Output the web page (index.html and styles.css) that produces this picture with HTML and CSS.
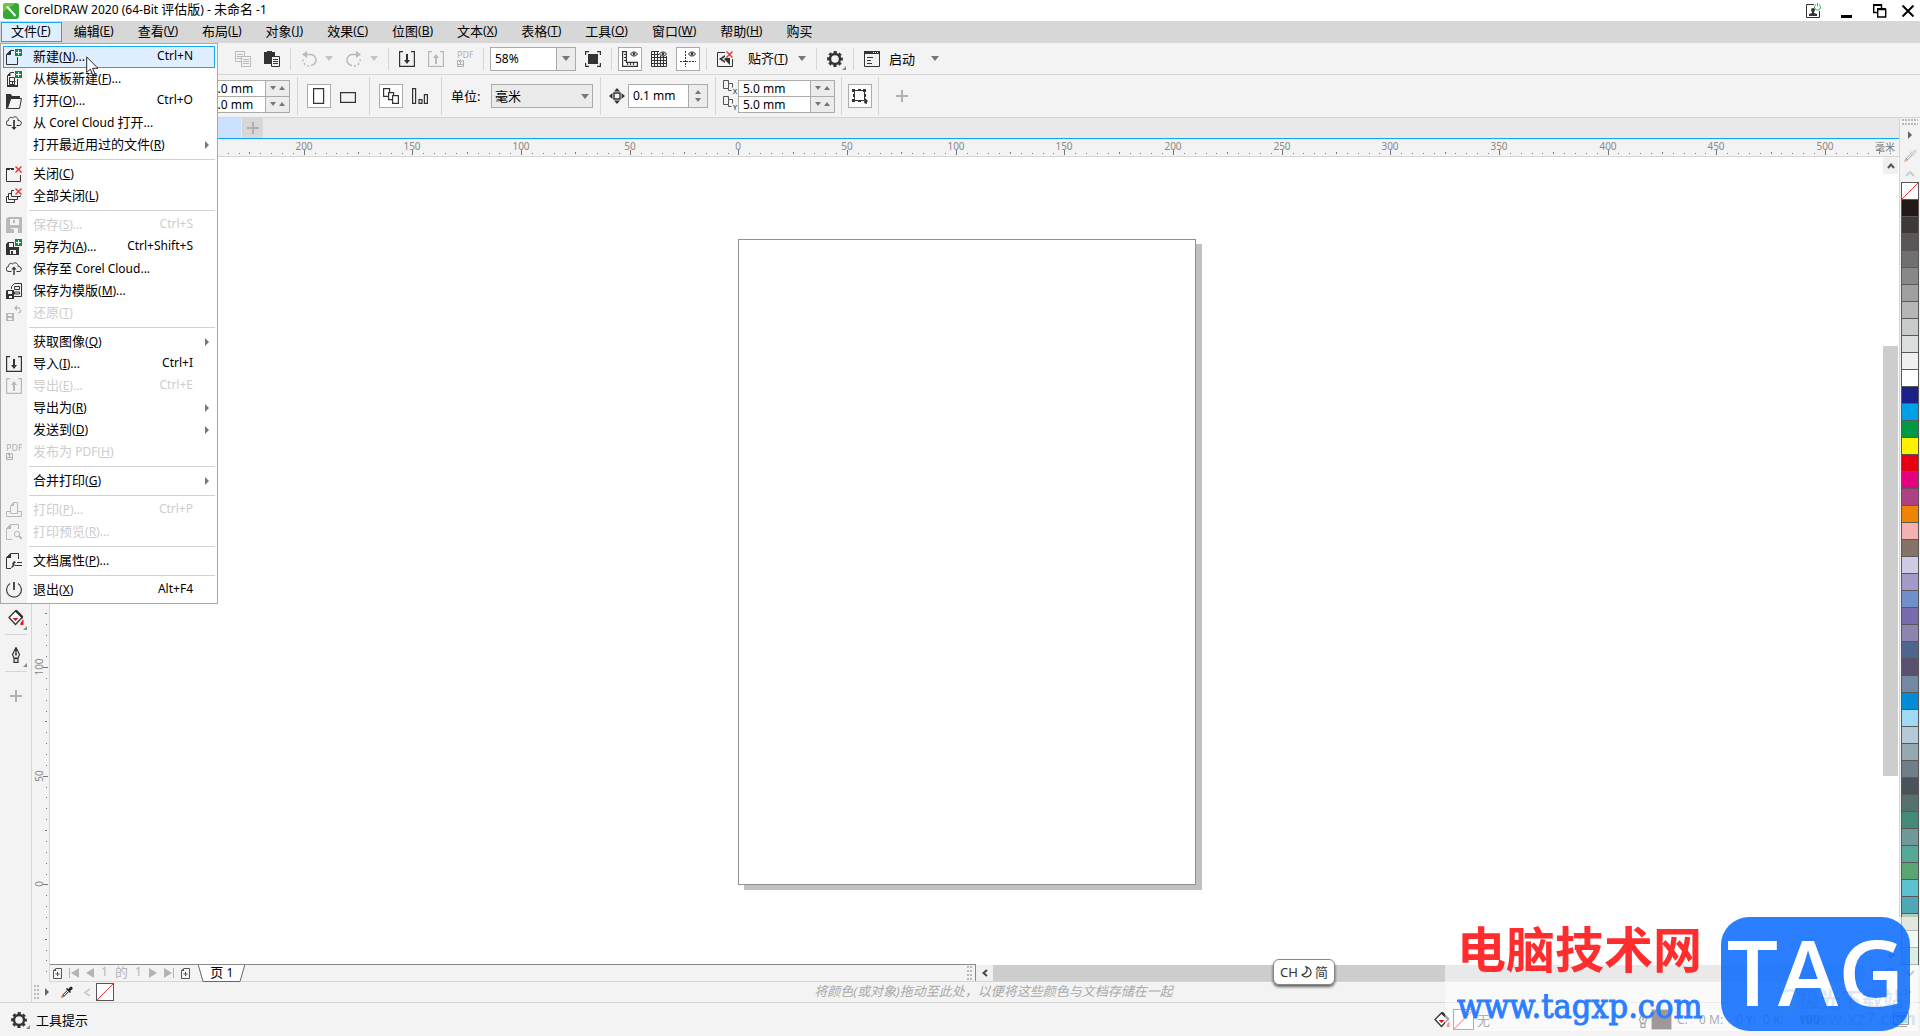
FILE: index.html
```html
<!DOCTYPE html>
<html lang="zh-CN">
<head>
<meta charset="utf-8">
<title>CorelDRAW 2020 (64-Bit 评估版) - 未命名 -1</title>
<link rel="stylesheet" href="styles.css">
</head>
<body>
<svg class="defs" aria-hidden="true">
  <symbol id="i-new" viewBox="0 0 16 16"><path fill="none" stroke="#333" d="M8 1.500H4.500L.5 5.500V15.500H11.500V8M4.500 1.500V5.500H.5"/><path fill="#333" d="M4.500 1 .5 5.500h4z"/><path fill="#00923f" d="M9 0h7v7H9z"/><path stroke="#fff" d="M12.500 1v5M10 3.500h5"/></symbol>
  <symbol id="i-template" viewBox="0 0 16 16"><path fill="none" stroke="#333" d="M8 1.500H4.500L1.500 4.500V15.500H11.500V8M3.500 6.500h5v7h-5zM3.500 10.500h6M6.500 10v3.500"/><path fill="#333" d="M4.500 1 1 5h3.500zM1 14h11v2H1z"/><path fill="#00923f" d="M9 0h7v7H9z"/><path stroke="#fff" d="M12.500 1v5M10 3.500h5"/></symbol>
  <symbol id="i-open" viewBox="0 0 16 16"><path fill="#333" d="M0 1h5l1 2h8v3H5L1 16H0z"/><path fill="none" stroke="#333" d="M1.500 15.500 4.500 5.500H15.500L13.500 15.500Z"/></symbol>
  <symbol id="i-clouddown" viewBox="0 0 16 16"><path fill="none" stroke="#333" d="M5.500 10.500H3a2.500 2.500 0 0 1-.5-5C2.500 2.500 5 1.500 6.500 3 9 .5 12.500 2.500 12 5.500c4-.5 4.500 5 1 5h-2.500M8 5v8"/><path fill="#333" d="M7.300 5h1.400v7h2L8 15l-2.700-3h2z"/></symbol>
  <symbol id="i-cloudup" viewBox="0 0 16 16"><path fill="none" stroke="#333" d="M5.500 10.500H3a2.500 2.500 0 0 1-.5-5C2.500 2.500 5 1.500 6.500 3 9 .5 12.500 2.500 12 5.500c4-.5 4.500 5 1 5h-2.500"/><path fill="#333" d="M7.300 14h1.400V8.500h2L8 5.500 5.300 8.500h2z"/></symbol>
  <symbol id="i-close" viewBox="0 0 16 16"><path fill="none" stroke="#333" d="M8 2.500H.5V15.500H14.500V9"/><path fill="#333" d="M0 2h4v2H0zM5 2h3v2H5z"/><path stroke="#ee2a2a" stroke-width="1.300" d="m9.500.5 6 6m0-6-6 6"/></symbol>
  <symbol id="i-closeall" viewBox="0 0 16 16"><path fill="none" stroke="#333" d="M8 2.500H5.500V8.500H14.500V7.500M5.500 5.500H2.500V11.500H11.500V8.500M2.500 8.500H.5V14.500H8.500V11.500"/><path stroke="#ee2a2a" stroke-width="1.300" d="m9.500.5 6 6m0-6-6 6"/></symbol>
  <symbol id="i-save" viewBox="0 0 16 16"><path fill="#b9b9b9" fill-rule="evenodd" d="M2 0h14v16H0V2zM4 2v6h9V2zM5 11v5h7v-5z"/><path fill="#b9b9b9" d="M7 3h2v3H7zM5 12h3v4H5z"/></symbol>
  <symbol id="i-saveas" viewBox="0 0 16 16"><path fill="#333" fill-rule="evenodd" d="M2 3h6v5h5v8H0V5zM3 4v4h4V4zM4 11v4h6v-4z"/><path fill="#333" d="M5 12h2v3H5z"/><path fill="#00923f" d="M9 0h7v7H9z"/><path stroke="#fff" d="M12.500 1v5M10 3.500h5"/></symbol>
  <symbol id="i-savetpl" viewBox="0 0 16 16"><path fill="none" stroke="#333" d="M8.500.5H15.500V13.500H8M8.500.5 5.500 3.500V6M8.500 3.500h5M8.500 3.500v3h5v-3M8.500 9h5v2h-5z"/><path fill="#333" fill-rule="evenodd" d="M1 7h7v9H0V8zM2 8v3h4V8zM3 13v2h3v-2z"/></symbol>
  <symbol id="i-revert" viewBox="0 0 16 16"><path fill="#b9b9b9" fill-rule="evenodd" d="M0 8h8v8H0zM2 9v2h4V9zM2 13v2h4v-2z"/><path fill="none" stroke="#b9b9b9" stroke-width="1.500" d="M10 3h3a2.500 2.500 0 0 1-1 4.800" stroke-dasharray="4 1"/><path fill="#b9b9b9" d="m8 3 3-3v6z"/></symbol>
  <symbol id="i-import" viewBox="0 0 16 16"><path fill="none" stroke="currentColor" stroke-width="1.200" d="M4 .6H.6V15.400H15.400V.6H12"/><path fill="currentColor" d="M7 3h2v6h2l-3 4-3-4h2z"/></symbol>
  <symbol id="i-export" viewBox="0 0 16 16"><path fill="none" stroke="currentColor" stroke-width="1.200" d="M4 .6H.6V15.400H15.400V.6H12"/><path fill="currentColor" d="M7 13h2V7h2L8 3 5 7h2z"/></symbol>
  <symbol id="i-pdf" viewBox="0 0 16 16"><text x="0" y="7" font-family="Noto Sans, sans-serif" font-size="9" fill="#b0b0b0">PDF</text><path fill="none" stroke="#b0b0b0" d="M3 9.500H.5V15.500H6.500V9.500H5M3.500 8.500v5M2 10.500h3M1 13.500h5"/></symbol>
  <symbol id="i-print" viewBox="0 0 16 16"><path fill="none" stroke="#b9b9b9" d="M5 9.500H.5V14.500H15.500V9.500H11M4.500 11.500V4.500l3-4h4V11.500z"/><path fill="#b9b9b9" d="M4 4 8 0v4z"/></symbol>
  <symbol id="i-preview" viewBox="0 0 16 16"><path fill="none" stroke="#b9b9b9" d="M6 15.500H.5V4.500l4-4H12.500V5"/><path fill="#b9b9b9" d="M0 5 5 0v5z"/><circle cx="11" cy="10" r="2.700" fill="none" stroke="#b9b9b9"/><path stroke="#b9b9b9" stroke-width="2" d="m13 12 3 3"/></symbol>
  <symbol id="i-props" viewBox="0 0 16 16"><path fill="none" stroke="#333" d="M5 15.500H.5V4.500l4-4H12.500V6M11 9.500h5M9 12.500h7"/><path fill="#333" d="M0 5 5 0v5zM8 8l2 1-2 2 1 1-3 3-1-1 2-2-1-1z"/></symbol>
  <symbol id="i-exit" viewBox="0 0 16 16"><path fill="none" stroke="#444" stroke-width="1.200" d="M4 1.500a7.400 7.400 0 1 0 8 0"/><path stroke="#222" stroke-width="1.600" d="M8 0v8"/></symbol>
  <symbol id="i-gear" viewBox="0 0 16 16"><circle cx="8" cy="8" r="5" fill="none" stroke="#333" stroke-width="2.400"/><circle cx="8" cy="8" r="6.900" fill="none" stroke="#333" stroke-width="2" stroke-dasharray="3.200 2.220" stroke-dashoffset="1.600"/></symbol>
  <symbol id="i-copy" viewBox="0 0 16 16"><path fill="#f3f3f3" stroke="#b9b9b9" d="M.5.500h9v10h-9z"/><path stroke="#b9b9b9" d="M2 3.500h6M2 5.500h5M2 7.500h5"/><path fill="#f3f3f3" stroke="#b9b9b9" d="M6.500 5.500h9v10h-9z"/><path stroke="#b9b9b9" d="M8 8.500h6M8 10.500h6M8 12.500h6"/></symbol>
  <symbol id="i-paste" viewBox="0 0 16 16"><path fill="#333" d="M0 1h3V0h5v1h3v12H0z"/><path fill="#f3f3f3" stroke="#333" d="M7.500 5.500h8v10h-8z"/><path stroke="#333" d="M9 8.500h5M9 10.500h5M9 12.500h5"/></symbol>
  <symbol id="i-undo" viewBox="0 0 16 16"><path fill="none" stroke="#b9b9b9" stroke-width="1.500" d="M5 3.500h4a5.500 5.500 0 0 1 1 11"/><path fill="none" stroke="#b9b9b9" stroke-width="1.500" stroke-dasharray="2 2" d="M8 15a6 6 0 0 1-6-7"/><path fill="#b9b9b9" d="m1 3.500 5-3.500v7z"/></symbol>
  <symbol id="i-full" viewBox="0 0 16 16"><path fill="#333" d="M3 3h10v10H3z"/><path fill="none" stroke="#333" stroke-width="1.200" d="M4 .6H.6V4M12 .6h3.400V4M4 15.400H.6V12M12 15.400h3.400V12"/></symbol>
  <symbol id="i-eye" viewBox="0 0 8 6"><path fill="#fff" stroke="#333" d="M.5 3C2 .3 6 .3 7.500 3 6 5.700 2 5.700.5 3z"/><circle cx="4" cy="3" r="1.400" fill="#333"/></symbol>
  <symbol id="i-rulers" viewBox="0 0 16 16"><path fill="none" stroke="#333" stroke-width="1.200" d="M.6.600H4.400V11.400H15.400V15.400H.6zM2 3.500h2M2 6.500h2M2 9.500h2M5.500 12v2M8.500 12v2M11.500 12v2"/><use href="#i-eye" x="8" y="0" width="8" height="6"/></symbol>
  <symbol id="i-grid" viewBox="0 0 16 16"><path fill="none" stroke="#333" d="M.5.500H15.500V15.500H.5zM3.500 0v16M6.500 0v16M9.500 0v16M12.500 0v16M0 3.500h16M0 6.500h16M0 9.500h16M0 12.500h16"/><path fill="#f3f3f3" d="M8 0h8v5H8z"/><use href="#i-eye" x="8" y="0" width="8" height="6"/></symbol>
  <symbol id="i-guides" viewBox="0 0 16 16"><path stroke="#333" stroke-dasharray="2 1" d="M5.500 0v16M0 10.500h16"/><use href="#i-eye" x="8" y="0" width="8" height="6"/></symbol>
  <symbol id="i-snap" viewBox="0 0 16 16"><path fill="none" stroke="#333" d="M8 1.500H.5V15.500H15.500V8"/><path fill="#333" d="m2 8 6-4v2L5 8l3 2v2zM7 8l6-4v10z"/><path fill="#f3f3f3" d="M9 0h7v7H9z"/><path stroke="#ee2a2a" stroke-width="1.300" d="m9.500.5 6 6m0-6-6 6"/></symbol>
  <symbol id="i-launch" viewBox="0 0 16 16"><path fill="none" stroke="#333" d="M.5.500H15.500V15.500H.5zM3 6.500h6M3 9.500h4M3 12.500h5"/><path fill="#333" d="M0 0h16v3H0z"/><path stroke="#f3f3f3" d="M9 1.500h1M11 1.500h1M13 1.500h1"/></symbol>
  <symbol id="i-pages" viewBox="0 0 16 16"><path fill="#fff" stroke="#333" stroke-width="1.200" d="M.6.600h6v7.800h-6z"/><path fill="#fff" stroke="#333" stroke-width="1.200" d="M5.600 4.600h5v7h-5z"/><path fill="#fff" stroke="#333" stroke-width="1.200" d="M9.600 7.600h5.800v7.800H9.600z"/></symbol>
  <symbol id="i-bars" viewBox="0 0 16 16"><path fill="none" stroke="#333" stroke-width="1.200" d="M.6.600h3v14.800h-3zM7 11.600h3v3.800H7zM12.400 6.600h3v8.800h-3z"/></symbol>
  <symbol id="i-nudge" viewBox="0 0 16 16"><path fill="none" stroke="#333" stroke-width="1.400" d="M5 5h6v6H5z"/><path fill="#333" d="m8 0 3 3.500H5zM8 16l3-3.500H5zM0 8l3.500-3v6zM16 8l-3.500-3v6z"/></symbol>
  <symbol id="i-dup" viewBox="0 0 13 14"><path fill="none" stroke="#555" d="M.5.500h5v8h-5zM6 3.500h3.500v4M5.500 8.500v2h3"/></symbol>
  <symbol id="i-bound" viewBox="0 0 16 16"><path fill="none" stroke="#333" d="M2.500 2.500h10v10h-10z"/><path fill="#333" d="M0 1h3v3H0zM11 1h3v3h-3zM0 11h3v3H0zM6 1h3v2H6zM6 12h3v2H6zM1 6h2v3H1zM12 6h2v3h-2zM13 10l3 3-1 1v2l-3-1z"/></symbol>
  <symbol id="i-fill" viewBox="0 0 16 16"><path fill="#fff" stroke="#333" stroke-width="1.300" d="M7.500 1 14 7.500l-6.500 7L1 7.500z"/><path fill="#333" d="M7 0h2l6 6v2l-2 1V7L8 2z"/><path fill="#e11" d="M4.500 8h6l-3 3zM12.500 13l3-4v6h-3z"/></symbol>
  <symbol id="i-pen" viewBox="0 0 10 16"><path fill="none" stroke="#333" stroke-width="1.200" d="M5 .5 1.500 7.500 3 11h4l1.500-3.500zM3 11.600h4v3.800H3zM5 1v6"/><circle cx="5" cy="7.500" r="1" fill="#333"/></symbol>
  <symbol id="i-dropper" viewBox="0 0 12 12"><path stroke="#555" stroke-width="2.500" d="m2 10 5-5"/><path stroke="#fff" d="m3 9 4-4"/><path fill="currentColor" d="m5 3 4 4 1-1-1-1 2-1.500C12.500 2 11 0 9 1L7.500 3 6 2z"/><path fill="#d9631e" d="m0 12 1-3 2 2z"/></symbol>
  <symbol id="i-addpage" viewBox="0 0 9 11"><path fill="none" stroke="#555" d="M3 .5h5.500v10h-8V3zM4.500 4v4M2.500 6h4"/><path fill="#555" d="M0 3 3 0v3z"/></symbol>
</svg>

<div class="app">
  <header class="titlebar">
    <svg class="logo" viewBox="0 0 16 16"><rect width="16" height="16" rx="3" fill="#35a835"/><path d="M0 3a3 3 0 0 1 3-3h10L0 9z" fill="#6cc83c"/><path d="m3 4 2-1 8 9-1 2z" fill="#fff"/></svg>
    <h1>CorelDRAW 2020 (64-Bit <span class="zh">评估版</span>) - <span class="zh">未命名</span> -1</h1>
    <div class="winbtns">
      <button aria-label="登录"><svg width="16" height="16" viewBox="0 0 16 16"><path fill="none" stroke="#333" d="M9 1.500H1.500v13H14.500V8"/><circle cx="8" cy="7" r="2" fill="#333"/><path fill="#333" d="M7 8h2v2l3 1v2H4v-2l3-1z"/><path fill="none" stroke="#1faa59" d="M11 1.500a3 3 0 1 0 3 0M12.500 0v3"/></svg></button>
      <button aria-label="最小化"><svg width="12" height="16" viewBox="0 0 12 16"><path d="M0 12h11v3H0z"/></svg></button>
      <button aria-label="还原"><svg width="14" height="14" viewBox="0 0 14 14"><path fill="none" stroke="#000" stroke-width="1.400" d="M4 8.500H.7V1H8.500V4M4.700 5.500h8v7.500h-8z"/><path d="M0 0h9v2H0zM4 4h9v2H4z"/></svg></button>
      <button class="quit" aria-label="关闭"><svg width="14" height="12" viewBox="0 0 14 12"><path stroke="#000" stroke-width="2" d="m1.500.5 11 11m0-11-11 11"/></svg></button>
    </div>
  </header>

  <nav class="menubar">
    <button class="open">文件<span class="en">(<u>F</u>)</span></button>
    <button>编辑<span class="en">(<u>E</u>)</span></button>
    <button>查看<span class="en">(<u>V</u>)</span></button>
    <button>布局<span class="en">(<u>L</u>)</span></button>
    <button>对象<span class="en">(<u>J</u>)</span></button>
    <button>效果<span class="en">(<u>C</u>)</span></button>
    <button>位图<span class="en">(<u>B</u>)</span></button>
    <button>文本<span class="en">(<u>X</u>)</span></button>
    <button>表格<span class="en">(<u>T</u>)</span></button>
    <button>工具<span class="en">(<u>O</u>)</span></button>
    <button>窗口<span class="en">(<u>W</u>)</span></button>
    <button>帮助<span class="en">(<u>H</u>)</span></button>
    <button>购买</button>
  </nav>

  <div class="toolbar standard">
    <button class="tool" aria-label="复制"><svg><use href="#i-copy"/></svg></button>
    <button class="tool" aria-label="粘贴"><svg><use href="#i-paste"/></svg></button>
    <i class="sep"></i>
    <button class="tool" aria-label="撤消"><svg><use href="#i-undo"/></svg></button>
    <button class="more" aria-label="撤消列表"><i class="caret pale"></i></button>
    <button class="tool" aria-label="重做"><svg class="flip"><use href="#i-undo"/></svg></button>
    <button class="more" aria-label="重做列表"><i class="caret pale"></i></button>
    <i class="sep"></i>
    <button class="tool" aria-label="导入"><svg><use href="#i-import"/></svg></button>
    <button class="tool off" aria-label="导出"><svg><use href="#i-export"/></svg></button>
    <button class="tool" aria-label="发布为 PDF"><svg><use href="#i-pdf"/></svg></button>
    <i class="sep"></i>
    <div class="field zoomlevel"><input type="text" value="58%" aria-label="缩放级别"><button aria-label="缩放列表"><i class="caret"></i></button></div>
    <button class="tool" aria-label="全屏预览"><svg><use href="#i-full"/></svg></button>
    <i class="sep"></i>
    <button class="tool on" aria-label="显示标尺"><svg><use href="#i-rulers"/></svg></button>
    <button class="tool" aria-label="显示网格"><svg><use href="#i-grid"/></svg></button>
    <button class="tool on" aria-label="显示辅助线"><svg><use href="#i-guides"/></svg></button>
    <i class="sep"></i>
    <button class="tool" aria-label="关闭贴齐"><svg><use href="#i-snap"/></svg></button>
    <button class="textbtn snap"><span>贴齐<span class="en">(<u>T</u>)</span></span><i class="caret"></i></button>
    <i class="sep"></i>
    <button class="tool corner" aria-label="选项"><svg><use href="#i-gear"/></svg></button>
    <i class="sep"></i>
    <button class="tool" aria-label="启动器"><svg><use href="#i-launch"/></svg></button>
    <button class="textbtn launch"><span>启动</span><i class="caret"></i></button>
  </div>

  <div class="toolbar property">
    <div class="pair pagesize">
      <div class="field"><input type="text" value="210.0 mm" aria-label="页面宽度"><button aria-label="调整宽度"><i class="caret sm"></i><i class="caret sm up"></i></button></div>
      <div class="field"><input type="text" value="297.0 mm" aria-label="页面高度"><button aria-label="调整高度"><i class="caret sm"></i><i class="caret sm up"></i></button></div>
    </div>
    <i class="sep near"></i>
    <button class="tool on" aria-label="纵向"><svg viewBox="0 0 16 16"><path fill="none" stroke="#333" stroke-width="1.200" d="M2.600.6h10v14.800h-10z"/></svg></button>
    <button class="tool" aria-label="横向"><svg viewBox="0 0 16 16"><path fill="none" stroke="#333" stroke-width="1.200" d="M.6 4.600h14.800v9.800H.6z"/></svg></button>
    <i class="sep"></i>
    <button class="tool on" aria-label="所有页面"><svg><use href="#i-pages"/></svg></button>
    <button class="tool" aria-label="当前页面"><svg><use href="#i-bars"/></svg></button>
    <i class="sep"></i>
    <label class="unitlabel" for="unit">单位:</label>
    <div class="unit"><select id="unit"><option>毫米</option></select><i class="caret"></i></div>
    <i class="sep near"></i>
    <div class="nudge"><svg width="16" height="16"><use href="#i-nudge"/></svg><div class="field"><input type="text" value="0.1 mm" aria-label="微调距离"><button class="stack" aria-label="调整微调距离"><i class="caret sm up"></i><i class="caret sm"></i></button></div></div>
    <i class="sep near"></i>
    <div class="dup">
      <div class="dupicons"><span><svg width="13" height="14"><use href="#i-dup"/></svg><b>X</b></span><span><svg width="13" height="14"><use href="#i-dup"/></svg><b>Y</b></span></div>
      <div class="pair">
        <div class="field"><input type="text" value="5.0 mm" aria-label="再制距离 X"><button aria-label="调整 X"><i class="caret sm"></i><i class="caret sm up"></i></button></div>
        <div class="field"><input type="text" value="5.0 mm" aria-label="再制距离 Y"><button aria-label="调整 Y"><i class="caret sm"></i><i class="caret sm up"></i></button></div>
      </div>
    </div>
    <i class="sep tight"></i>
    <button class="tool on" aria-label="视为已填充"><svg><use href="#i-bound"/></svg></button>
    <i class="sep tight"></i>
    <button class="add" aria-label="自定义"><i class="plus"></i></button>
  </div>

  <div class="body">
    <aside class="toolbox">
      <button class="corner" aria-label="交互式填充"><svg width="16" height="16"><use href="#i-fill"/></svg></button>
      <hr>
      <button class="corner" aria-label="轮廓笔"><svg width="10" height="16"><use href="#i-pen"/></svg></button>
      <hr>
      <button aria-label="快速自定义"><i class="plus"></i></button>
    </aside>

    <div class="workspace">
      <div class="upper">
        <div class="document">
          <div class="doctabs"><button class="doctab" aria-label="未命名 -1"></button><button class="newtab" aria-label="新文档"><i class="plus"></i></button></div>
          <div class="hruler"><svg id="hruler"></svg><span>毫米</span></div>
          <div class="view">
            <div class="vruler"><svg id="vruler"></svg></div>
            <div class="drawing">
              <div class="stage">
                <div class="canvas"><div class="page"></div></div>
                <div class="vscroll"><button aria-label="向上"><svg width="8" height="6" viewBox="0 0 8 6"><path fill="none" stroke="#555" stroke-width="2" d="m1 5 3-3.500L7 5"/></svg></button><i class="thumb"></i><button class="clear" aria-label="向下"><svg width="8" height="6" viewBox="0 0 8 6"><path fill="none" stroke="#333" stroke-width="2" d="m1 1 3 3.500L7 1"/></svg></button></div>
              </div>
              <div class="pagebar">
                <div class="pagenav">
                  <button aria-label="在前面加页"><svg width="9" height="11"><use href="#i-addpage"/></svg></button>
                  <button aria-label="第一页"><svg width="10" height="10" viewBox="0 0 10 10"><path fill="#b4b4b4" d="M0 0h1v10H0zM10 0v10L2 5z"/></svg></button>
                  <button aria-label="上一页"><svg width="8" height="10" viewBox="0 0 8 10"><path fill="#b4b4b4" d="M8 0v10L0 5z"/></svg></button>
                  <span class="en">1</span><span>的</span><span class="en">1</span>
                  <button aria-label="下一页"><svg width="8" height="10" viewBox="0 0 8 10"><path fill="#b4b4b4" d="M0 0v10l8-5z"/></svg></button>
                  <button aria-label="最后一页"><svg width="10" height="10" viewBox="0 0 10 10"><path fill="#b4b4b4" d="M9 0h1v10H9zM0 0v10l8-5z"/></svg></button>
                  <button aria-label="在后面加页"><svg width="9" height="11"><use href="#i-addpage"/></svg></button>
                  <button class="pagetab"><svg width="48" height="17" viewBox="0 0 48 17"><path fill="#fff" d="M0-1 5 16H42L47-1z"/><path fill="none" stroke="#666" d="M0-1 5 16.500H42L47-1"/></svg><span>页 <span class="en">1</span></span></button>
                  <i class="grip"></i>
                </div>
                <div class="hscroll"><button aria-label="向左"><svg width="6" height="8" viewBox="0 0 6 8"><path fill="none" stroke="#444" stroke-width="2" d="M5 1 1.500 4 5 7"/></svg></button><i class="thumb"></i><button class="clear" aria-label="向右"><svg width="6" height="8" viewBox="0 0 6 8"><path fill="none" stroke="#444" stroke-width="2" d="m1 1 3.500 3L1 7"/></svg></button><button class="clear" aria-label="导航器"><svg width="12" height="12" viewBox="0 0 12 12"><circle cx="5" cy="5" r="4" fill="none" stroke="#444"/><path stroke="#444" d="M5 3v4M3 5h4M8 8l3.500 3.500"/></svg></button></div>
              </div>
            </div>
          </div>
        </div>
        <aside class="palette">
          <i class="grip wide"></i>
          <button aria-label="调色板菜单"><i class="play"></i></button>
          <button class="pale" aria-label="滴管"><svg width="13" height="13"><use href="#i-dropper"/></svg></button>
          <button class="short" aria-label="向上滚动"><svg width="10" height="8" viewBox="0 0 10 8"><path fill="none" stroke="#ccc" stroke-width="2" d="m1 6 4-4 4 4"/></svg></button>
          <div class="swatches" id="swatches"></div>
          <button class="short" aria-label="向下滚动"><svg width="10" height="8" viewBox="0 0 10 8"><path fill="none" stroke="#888" stroke-width="2" d="m1 1 4 4 4-4"/></svg></button>
        </aside>
      </div>
      <div class="tray">
        <i class="grip"></i>
        <button aria-label="文档调色板菜单"><i class="play"></i></button>
        <button class="eyedrop" aria-label="滴管"><svg width="12" height="12"><use href="#i-dropper"/></svg></button>
        <button aria-label="向左滚动"><svg width="8" height="9" viewBox="0 0 8 9"><path fill="none" stroke="#ccc" stroke-width="2" d="M7 1 2 4.500 7 8"/></svg></button>
        <button class="nocolor" aria-label="无颜色"></button>
        <p>将颜色(或对象)拖动至此处，以便将这些颜色与文档存储在一起</p>
        <button aria-label="展开"><svg width="8" height="8" viewBox="0 0 8 8"><path fill="none" stroke="#777" d="m1 1 3 3-3 3M4 1l3 3-3 3"/></svg></button>
      </div>
    </div>
  </div>

  <footer class="status">
    <button class="corner gear" aria-label="状态栏选项"><svg width="16" height="16"><use href="#i-gear"/></svg></button>
    <span class="hint">工具提示</span>
    <div class="fillinfo"><svg width="16" height="16"><use href="#i-fill"/></svg><i class="chip none"></i><span>无</span></div>
    <div class="outlineinfo"><svg width="10" height="16"><use href="#i-pen"/></svg><i class="chip"></i><span class="cmyk"><span>C:</span><span>0</span><span>M:</span><span>0</span><span>Y:</span><span>0</span><span>K:</span><span>100</span></span></div>
    <svg class="proof" width="16" height="16" viewBox="0 0 16 16"><path fill="#fff" stroke="#333" d="M.5.500h15v12H.5z"/><path fill="#b33a78" d="M2 2h10v3H2z"/><path fill="#3fc0b0" d="M5 5h9v6H5z"/><path stroke="#333" d="M2 14.500h12"/></svg>
  </footer>
</div>

<div class="filemenu" role="menu">
  <button class="hot"><svg><use href="#i-new"/></svg><span>新建<span class="en">(<u>N</u>)...</span></span><kbd>Ctrl+N</kbd></button>
  <button><svg><use href="#i-template"/></svg><span>从模板新建<span class="en">(<u>F</u>)...</span></span></button>
  <button><svg><use href="#i-open"/></svg><span>打开<span class="en">(<u>O</u>)...</span></span><kbd>Ctrl+O</kbd></button>
  <button><svg><use href="#i-clouddown"/></svg><span>从<span class="en"> Corel Cloud </span>打开<span class="en">...</span></span></button>
  <button class="sub"><svg></svg><span>打开最近用过的文件<span class="en">(<u>R</u>)</span></span></button>
  <hr>
  <button><svg><use href="#i-close"/></svg><span>关闭<span class="en">(<u>C</u>)</span></span></button>
  <button><svg><use href="#i-closeall"/></svg><span>全部关闭<span class="en">(<u>L</u>)</span></span></button>
  <hr>
  <button class="off"><svg><use href="#i-save"/></svg><span>保存<span class="en">(<u>S</u>)...</span></span><kbd>Ctrl+S</kbd></button>
  <button><svg><use href="#i-saveas"/></svg><span>另存为<span class="en">(<u>A</u>)...</span></span><kbd>Ctrl+Shift+S</kbd></button>
  <button><svg><use href="#i-cloudup"/></svg><span>保存至<span class="en"> Corel Cloud...</span></span></button>
  <button><svg><use href="#i-savetpl"/></svg><span>保存为模版<span class="en">(<u>M</u>)...</span></span></button>
  <button class="off"><svg><use href="#i-revert"/></svg><span>还原<span class="en">(<u>T</u>)</span></span></button>
  <hr>
  <button class="sub"><svg></svg><span>获取图像<span class="en">(<u>Q</u>)</span></span></button>
  <button><svg><use href="#i-import"/></svg><span>导入<span class="en">(<u>I</u>)...</span></span><kbd>Ctrl+I</kbd></button>
  <button class="off"><svg><use href="#i-export"/></svg><span>导出<span class="en">(<u>E</u>)...</span></span><kbd>Ctrl+E</kbd></button>
  <button class="sub"><svg></svg><span>导出为<span class="en">(<u>R</u>)</span></span></button>
  <button class="sub"><svg></svg><span>发送到<span class="en">(<u>D</u>)</span></span></button>
  <button class="off"><svg><use href="#i-pdf"/></svg><span>发布为<span class="en"> PDF(<u>H</u>)</span></span></button>
  <hr>
  <button class="sub"><svg></svg><span>合并打印<span class="en">(<u>G</u>)</span></span></button>
  <hr>
  <button class="off"><svg><use href="#i-print"/></svg><span>打印<span class="en">(<u>P</u>)...</span></span><kbd>Ctrl+P</kbd></button>
  <button class="off"><svg><use href="#i-preview"/></svg><span>打印预览<span class="en">(<u>R</u>)...</span></span></button>
  <hr>
  <button><svg><use href="#i-props"/></svg><span>文档属性<span class="en">(<u>P</u>)...</span></span></button>
  <hr>
  <button><svg><use href="#i-exit"/></svg><span>退出<span class="en">(<u>X</u>)</span></span><kbd>Alt+F4</kbd></button>
</div>
<svg class="cursor" width="13" height="20" viewBox="0 0 13 20"><path fill="#fff" stroke="#223" d="M.7 1v15.500l3.600-3.400 2.500 6 2.300-1-2.500-5.800H12z"/></svg>

<div class="ime">CH <svg width="11" height="12" viewBox="0 0 11 12"><path fill="none" stroke="#333" stroke-width="1.200" d="M5 .8c2 2.500 1.500 6.500-4 8C4 12.500 9.500 11 10 7c.3-3-2-5.500-5-6.200z"/></svg> 简</div>

<div class="mark">
  <div class="site"><strong>电脑技术网</strong><span>www.tagxp.com</span></div>
  <div class="tag">TAG</div>
  <div class="faint"><svg width="42" height="34" viewBox="0 0 42 34"><path fill="none" stroke="#2a86d8" stroke-width="3" d="M40 2C22-1 4 8 3 20c0 10 16 12 24 4M22 14c-8-1-12 3-11 8 2 5 12 4 14-3h-6"/><path fill="#4aa36a" d="M26 24c5-2 10-8 11-14 5 8-2 16-11 14z"/></svg><div><b>极光下载站</b><span>www.xz7.com</span></div></div>
</div>
<script src="app.js"></script>
</body>
</html>
```
FILE: styles.css
```css
* { box-sizing: border-box; }
html, body { height: 100%; margin: 0; }
body { font: 13px/20px "Noto Sans", "Noto Sans CJK SC", sans-serif; color: #000; background: #f3f3f3; overflow: hidden; position: relative; }
button, input, select { font: inherit; color: inherit; margin: 0; padding: 0; border: 0; background: none; border-radius: 0; }
button { display: flex; align-items: center; justify-content: center; white-space: nowrap; }
svg { display: block; flex: none; }
i { display: block; flex: none; }
p { margin: 0; }
u { text-underline-offset: 1px; }
.defs { position: absolute; width: 0; height: 0; }
.en { font-size: 12px; white-space: pre; }
.app { min-height: 100%; height: 100%; display: flex; flex-direction: column; }

.caret { width: 0; height: 0; border: 4px solid transparent; border-top: 5px solid #777; border-bottom: 0; }
.caret.pale { border-top-color: #c4c4c4; }
.caret.sm { border-width: 4px 3px 0; }
.caret.up { transform: rotate(180deg); }
.plus { width: 12px; height: 12px; background: linear-gradient(#b0b0b0, #b0b0b0) center / 2px 12px no-repeat, linear-gradient(#b0b0b0, #b0b0b0) center / 12px 2px no-repeat; }
.play { width: 0; height: 0; border: 4px solid transparent; border-left: 4px solid #666; border-right: 0; }
.grip { width: 6px; height: 14px; background: radial-gradient(circle at 1px 1px, #bbb 1px, transparent 1px) 0 0 / 3px 4px; }
.corner { position: relative; }
.corner::after { content: ""; position: absolute; right: 0; bottom: 0; border: 2px solid #888; border-top-color: transparent; border-left-color: transparent; }

.titlebar { height: 21px; background: #fff; display: flex; align-items: center; padding: 0 5px 0 3px; }
.logo { width: 16px; height: 16px; margin-right: 5px; }
.titlebar h1 { font-size: 12px; font-weight: 400; margin: 0; flex: 1; padding-bottom: 2px; }
.zh { font-size: 13px; }
.winbtns { display: flex; gap: 20px; align-items: center; }
.quit { margin-left: -6px; }

.menubar { height: 22px; background: #d7d7d7; display: flex; padding: 1px 0 1px 1px; }
.menubar button { border: 1px solid transparent; padding: 0 11px 2px; height: 20px; }
.menubar .open { background: #dfefff; border-color: #14a7f5; padding: 0 10px 2px 9px; }

.toolbar { display: flex; align-items: center; gap: 5px; border-bottom: 1px solid #d5d5d5; background: #f3f3f3; }
.standard { height: 32px; padding-left: 231px; }
.property { height: 43px; padding-left: 190px; }
.tool { width: 24px; height: 24px; flex: none; color: #333; border: 1px solid transparent; }
.tool svg { width: 16px; height: 16px; }
.tool.on { background: #fff; border-color: #ababab; }
.tool.off { color: #b9b9b9; }
.flip { transform: scaleX(-1); }
.sep { width: 1px; height: 22px; background: #d5d5d5; margin: 0 1px; }
.property .sep { height: 38px; margin: 0 4px; }
.property .sep.near { margin-left: 2px; }
.property .sep.tight { margin: 0 1px; }
.more { width: 12px; margin: 0 2px 0 -3px; height: 24px; }
.textbtn { height: 24px; justify-content: flex-start; }
.snap { width: 68px; padding: 0 4px 0 6px; justify-content: space-between; }
.launch { gap: 16px; }

.field { display: flex; height: 24px; border: 1px solid #ababab; background: #fff; font-size: 12px; }
.field input { flex: 1; min-width: 0; padding-left: 4px; }
.field button { width: 24px; background: #ececec; border-left: 1px solid #ababab; justify-content: space-evenly; }
.zoomlevel { width: 86px; }
.zoomlevel button { width: 19px; }
.field .stack { width: 19px; flex-direction: column; }
.pair .field { height: 17px; line-height: 15px; }
.pair .field + .field { margin-top: -1px; }
.pair { width: 97px; }
.pagesize { width: 100px; }
.unitlabel { width: 35px; }
.unit { width: 102px; position: relative; }
.unit select { width: 100%; height: 24px; appearance: none; border: 1px solid #ababab; background: #ebebeb; padding-left: 3px; }
.unit .caret { position: absolute; right: 4px; top: 10px; pointer-events: none; }
.nudge { display: flex; align-items: center; gap: 3px; margin-left: -1px; }
.nudge .field { width: 80px; }
.dup { display: flex; align-items: center; margin-left: -2px; }
.dupicons { width: 15px; }
.dupicons span { display: flex; height: 16px; position: relative; }
.dupicons b { position: absolute; right: 1px; bottom: 0; font-size: 7px; line-height: 8px; font-weight: 400; }
.pagesize input { padding-left: 6px; }
.add { width: 34px; height: 24px; }

.body { flex: 1; min-height: 0; display: flex; }
.toolbox { width: 32px; flex: none; border-right: 1px solid #d5d5d5; border-bottom: 1px solid #d5d5d5; padding: 488px 4px 0 5px; }
.toolbox button { width: 22px; height: 24px; margin-bottom: 4px; }
.toolbox hr { border: 0; height: 1px; background: #d5d5d5; margin: 0 0 8px; }
.toolbox button + hr + button + hr + button { margin-top: 12px; }
.workspace { flex: 1; min-width: 0; display: flex; flex-direction: column; }
.upper { flex: 1; min-height: 0; display: flex; }
.document { flex: 1; min-width: 0; display: flex; flex-direction: column; }
.doctabs { height: 21px; flex: none; display: flex; background: #e9e9e9; border-bottom: 1px solid #0ea5f2; }
.doctab { width: 209px; background: #cce0ff; margin-right: 1px; }
.newtab { width: 21px; background: #d7d7d7; }
.hruler { height: 18px; flex: none; border-bottom: 1px solid #d5d5d5; position: relative; }
.hruler svg { width: 100%; height: 17px; }
.hruler span { position: absolute; right: 4px; top: 0; font-size: 10px; line-height: 16px; color: #777; }
.hruler text, .vruler text { font-size: 10px; fill: #888; text-anchor: middle; }
.view { flex: 1; min-height: 0; display: flex; }
.vruler { width: 18px; flex: none; border-right: 1px solid #d5d5d5; }
.vruler svg { width: 17px; height: 100%; }
.drawing { flex: 1; min-width: 0; display: flex; flex-direction: column; background: #fff; }
.stage { flex: 1; min-height: 0; display: flex; }
.canvas { flex: 1; position: relative; overflow: hidden; }
.page { position: absolute; left: 688px; top: 82px; width: 458px; height: 646px; border: 1px solid #909090; background: #fff; box-shadow: 6px 5px 0 #c0c0c0; }
.page::before, .page::after { content: ""; position: absolute; background: #fff; }
.page::before { right: -7px; top: -1px; width: 6px; height: 5px; }
.page::after { left: -1px; bottom: -6px; width: 6px; height: 5px; }
.vscroll { width: 15px; margin-right: 1px; display: flex; flex-direction: column; align-items: stretch; }
.vscroll button { height: 17px; background: #f0f0f0; }
.vscroll .thumb { height: 430px; margin: 172px 0 auto; background: #cdcdcd; }
.vscroll .clear, .hscroll .clear { background: none; }
.pagebar { height: 18px; flex: none; display: flex; background: #fff; border-bottom: 1px solid #d5d5d5; }
.pagenav { width: 926px; display: flex; align-items: center; background: #f3f3f3; border-top: 1px solid #888; border-right: 1px solid #888; padding: 0 2px 0 3px; gap: 7px; color: #b4b4b4; }
.pagenav > span { padding-bottom: 2px; }
.pagetab { position: relative; width: 48px; height: 17px; margin: 0 auto 0 1px; color: #000; }
.pagetab svg { position: absolute; left: 0; top: 0; }
.pagetab > span { position: relative; padding-bottom: 2px; }
.hscroll { flex: 1; display: flex; height: 16px; margin-top: 1px; }
.hscroll button { width: 17px; background: #f0f0f0; }
.hscroll .thumb { flex: 1; background: #cdcdcd; }

.palette { width: 21px; flex: none; border-left: 1px solid #d5d5d5; display: flex; flex-direction: column; align-items: center; }
.palette button { height: 20px; flex: none; }
.palette .short { height: 17px; }
.palette .pale { color: #bbb; opacity: .5; }
.grip.wide { width: 16px; height: 6px; margin-top: 1px; }
.swatches { width: 18px; flex: 1; min-height: 0; overflow: hidden; border: 1px solid #595757; border-bottom: 0; }
.palette .swatches button { width: 16px; height: 17px; border-bottom: 1px solid #595757; }
.palette .swatches .nocolor, .nocolor, .chip.none { background: linear-gradient(to top left, transparent 47%, #e33 48%, #e33 52%, transparent 53%) #fff; }

.tray { height: 21px; flex: none; display: flex; align-items: center; border-bottom: 1px solid #d5d5d5; padding: 0 5px 0 2px; }
.tray button { width: 14px; }
.tray .eyedrop { width: 26px; color: #222; }
.tray .nocolor { width: 18px; height: 18px; border: 1px solid #555; margin-left: 2px; }
.tray p { flex: 1; text-align: center; font-style: italic; color: #a9a9a9; padding: 0 28px 2px 0; }

.status { height: 33px; flex: none; display: flex; align-items: center; padding: 0 11px; }
.gear { width: 19px; height: 19px; justify-content: flex-start; }
.hint { margin-left: 6px; flex: 1; }
.fillinfo, .outlineinfo { display: flex; align-items: center; gap: 3px; color: #444; }
.fillinfo { width: 204px; }
.outlineinfo { width: 255px; }
.chip { width: 21px; height: 21px; background: #231815; border: 1px solid #999; }
.chip.none { background-color: #fff; border-color: #444; }
.cmyk { display: grid; grid-template-columns: 22px 10px 27px 10px 17px 10px 26px 24px; font-size: 12px; margin-left: 2px; }

.filemenu { position: absolute; left: 0; top: 43px; width: 218px; padding: 2px; border: 1px solid #a8a8a8; background: linear-gradient(to right, #f3f3f3 26px, #fff 26px); }
.filemenu button { width: 100%; height: 22px; justify-content: flex-start; border: 1px solid transparent; padding: 0 21px 0 2px; color: #000; position: relative; }
.filemenu span, .filemenu kbd { padding-bottom: 2px; }
.filemenu svg { width: 16px; height: 16px; margin-right: 11px; color: #333; }
.filemenu kbd { font: inherit; font-size: 12px; margin-left: auto; }
.filemenu .hot { background: #dfefff; border-color: #14a7f5; }
.filemenu .off { color: #cdcdcd; }
.filemenu .off svg { color: #b9b9b9; }
.filemenu hr { border: 0; height: 1px; margin: 3px 0 3px 26px; background: #d2d2d2; }
.sub::after { content: ""; position: absolute; right: 5px; top: 6px; border: 4px solid transparent; border-left-color: #777; border-right: 0; }
.cursor { position: absolute; left: 86px; top: 56px; }

.ime { position: absolute; left: 1273px; bottom: 51px; width: 62px; height: 26px; display: flex; align-items: center; justify-content: center; gap: 3px; background: #fff; border: 1px solid #888; border-radius: 6px; box-shadow: 0 2px 3px rgba(0,0,0,.6); color: #333; }

.mark { position: absolute; right: 2px; bottom: 5px; width: 473px; height: 114px; background: rgba(255,255,255,.56); display: flex; justify-content: space-between; padding-right: 8px; }
.site { width: 270px; padding-left: 12px; white-space: nowrap; }
.site strong { display: block; font: 700 49px/60px "Noto Sans CJK SC", sans-serif; color: #ff2d2d; }
.site span { display: block; font: 34px/58px "DejaVu Serif Condensed", "DejaVu Serif", serif; font-stretch: condensed; color: #2b7fff; -webkit-text-stroke: 1px #2b7fff; }
.tag { width: 189px; height: 114px; border-radius: 28px; background: rgba(6,105,255,.85); color: #fff; font: 600 91px/108px "Open Sans", sans-serif; text-align: center; }
.faint { position: absolute; right: 2px; bottom: 2px; display: flex; opacity: .14; color: #0a5fc0; }
.faint b { display: block; font-size: 21px; line-height: 20px; }
.faint span { display: block; font: 700 17px/20px "Open Sans", sans-serif; }
```
FILE: app.js
```js
// Rulers and colour palette are built from data.
const NS = "http://www.w3.org/2000/svg";
const PX_PER_MM = 2.173;

function add(svg, name, attrs, text) {
  const el = document.createElementNS(NS, name);
  for (const k in attrs) el.setAttribute(k, attrs[k]);
  if (text !== undefined) el.textContent = text;
  svg.appendChild(el);
}

function drawRuler(svg, origin, length, vertical) {
  const dir = vertical ? -1 : 1;
  for (let mm = -1000; mm <= 1000; mm += 5) {
    const p = Math.floor(origin + dir * mm * PX_PER_MM);
    if (p < 0 || p > length) continue;
    const major = mm % 50 === 0;
    const size = major ? 5 : mm % 25 === 0 ? 2 : 1;
    const end = major ? 16 : 15;
    add(svg, "rect", vertical
      ? { x: end - size, y: p, width: size, height: 1, fill: "#777" }
      : { x: p, y: end - size, width: 1, height: size, fill: "#777" });
    if (major) {
      add(svg, "text", vertical
        ? { x: 0, y: 0, transform: `translate(11 ${p}) rotate(-90)` }
        : { x: p, y: 11 }, Math.abs(mm));
    }
  }
}

const h = document.getElementById("hruler");
const v = document.getElementById("vruler");
drawRuler(h, 706.9, h.clientWidth || 1867, false);
drawRuler(v, 727.9, v.clientHeight || 824, true);

const colours = ["none", "#231815", "#3e3837", "#595757", "#707070", "#888888", "#9e9f9f", "#b4b5b4", "#c9caca",
  "#dcdddd", "#efefef", "#ffffff", "#1d2088", "#00a0e9", "#009944", "#fff100", "#e60012", "#e4007f", "#b04084",
  "#f08300", "#f5b1b1", "#877268", "#cfcbe4", "#a599ca", "#7190c9", "#7a6ab0", "#8e84ae", "#4f648f", "#5a5070",
  "#7389a3", "#008cd6", "#9fd9f6", "#b4cbd7", "#95a9b3", "#707f87", "#495359", "#56706d", "#448a79", "#72999a",
  "#56a898", "#5aa572", "#5cc2d0", "#4fa9b4", "#b9cbb7", "#dfeee0", "#b5d9bb"];
const box = document.getElementById("swatches");
for (const c of colours) {
  const b = document.createElement("button");
  b.setAttribute("aria-label", c);
  if (c === "none") b.className = "nocolor"; else b.style.background = c;
  box.appendChild(b);
}
```
